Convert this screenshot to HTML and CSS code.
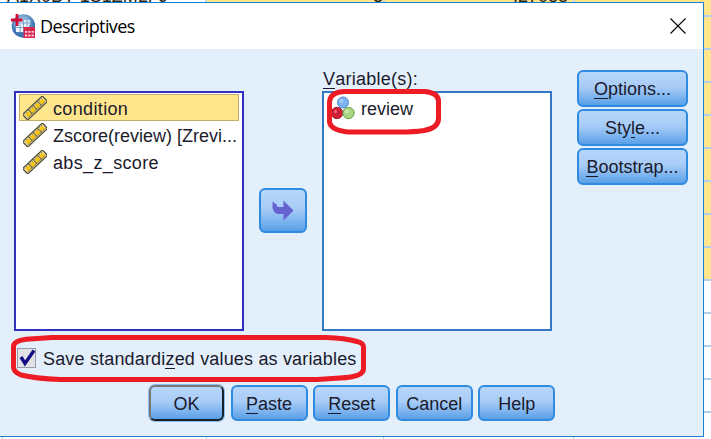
FILE: index.html
```html
<!DOCTYPE html>
<html lang="en">
<head>
<meta charset="utf-8">
<title>Descriptives</title>
<link rel="stylesheet" href="styles.css">
</head>
<body>
<svg class="defs" width="0" height="0">
  <symbol id="ruler" viewBox="0 0 24 24">
    <g transform="rotate(-43 12 12)">
      <rect x="-1.600" y="8.200" width="27.200" height="7.600" fill="#eadb9c" stroke="#4b4936" stroke-width="1.200"/>
      <path d="M0 14h24" stroke="#a39459" stroke-width="1.600"/>
      <path d="M.8 12h4.400M7 12h4.400M13.200 12h4.400M19.400 12h4.400" stroke="#f8c50a" stroke-width="3.600"/>
      <path d="M0 9.500h24" stroke="#6d694b" stroke-width="1" stroke-dasharray="1 1.500"/>
      <path d="M6.100 8.500v6M12.300 8.500v6M18.500 8.500v6" stroke="#6d6747" stroke-width="1"/>
    </g>
  </symbol>
</svg>
<div class="screen">
  <div class="sheet-top">
    <span class="cell id"><i>A1X0BY 1S1ZMLFJ</i></span><span class="cell a"><i>3</i></span><span class="cell b"><i>-.27088</i></span><span class="cell c"></span>
  </div>
  <div class="sheet-side"></div>
  <div class="sheet-bottom"><span></span><span></span><span></span><span></span></div>
  <section class="dialog">
    <header class="titlebar">
      <svg class="appicon" width="24" height="24" viewBox="0 0 24 24">
        <defs><radialGradient id="globe" cx="45%" cy="35%"><stop offset="0" stop-color="#c5dcf0"/><stop offset=".6" stop-color="#75a4d0"/><stop offset="1" stop-color="#3c73b1"/></radialGradient></defs>
        <circle cx="12.500" cy="12" r="11.800" fill="url(#globe)"/>
        <path d="M5 10h13v8H5z" fill="#f1f7fc"/>
        <path d="M10 6h9v5h-9z" fill="#dceaf6"/>
        <path d="M5 13.500h13M9 10v8M12.500 6v12M16 6v12M10 9h9" stroke="#79a5d0" fill="none"/>
        <path d="M6 0v12M0 6h11.500" stroke="#d10c38" stroke-width="2.800"/>
        <path d="M12.500 13H24v11H12.500z" fill="#d9274c"/>
        <path d="M14 17h2.200v1.800H14zM17.300 17h2.200v1.800h-2.200zM20.600 17h2.200v1.800h-2.200zM14 20.600h2.200v1.800H14zM17.300 20.600h2.200v1.800h-2.200zM20.600 20.600h2.200v1.800h-2.200z" fill="#fbd0da"/>
      </svg>
      <h1>Descriptives</h1>
      <svg class="close" width="16" height="16" viewBox="0 0 16 16"><path d="M.5.5l15 15M15.500.5l-15 15" stroke="#000" stroke-width="1.100"/></svg>
    </header>
    <main class="body">
      <div class="columns">
        <ul class="list source">
          <li class="selected"><svg width="24" height="24"><use href="#ruler"/></svg><span class="wide">condition</span></li>
          <li><svg width="24" height="24"><use href="#ruler"/></svg><span>Zscore(review) [Zrevi...</span></li>
          <li><svg width="24" height="24"><use href="#ruler"/></svg><span class="wide">abs_z_score</span></li>
        </ul>
        <button class="move" aria-label="Move"><svg width="22" height="21" viewBox="0 0 22 21"><path d="M.5 1.500V8Q2 14 7 14h4.500v6.500L21.500 10.500 11.500 .5V7H6.500Q5 7 4.500 4.500Z" fill="#6563cf"/></svg></button>
        <div class="target">
          <label><u>V</u>ariable(s):</label>
          <ul class="list">
            <li><svg width="24" height="24" viewBox="0 0 24 24"><circle cx="12" cy="6.500" r="5.500" fill="#7eb2ee" stroke="#4a8bd2"/><circle cx="6" cy="17" r="5.700" fill="#cf2136" stroke="#a91827"/><circle cx="17.500" cy="17" r="5.700" fill="#a8d682" stroke="#6ba148"/><circle cx="10.500" cy="5" r="2" fill="#a5cdf8"/><circle cx="4.500" cy="15.500" r="1.500" fill="#ed6d78"/><circle cx="16" cy="15.500" r="2" fill="#cdecae"/></svg><span>review</span></li>
          </ul>
        </div>
        <div class="side">
          <button><span><u>O</u>ptions...</span></button>
          <button><span>Sty<u>l</u>e...</span></button>
          <button><span><u>B</u>ootstrap...</span></button>
        </div>
      </div>
      <label class="save">
        <svg width="19" height="20" viewBox="0 0 19 20"><rect x=".5" y=".5" width="18" height="19" fill="#e2e2e6" stroke="#969da8"/><path d="M4 9L8 15.500 17 2.500" fill="none" stroke="#140f86" stroke-width="3.400"/></svg>
        <span>Save standardi<u>z</u>ed values as variables</span>
      </label>
      <footer>
        <button class="ok"><span>OK</span></button>
        <button><span><u>P</u>aste</span></button>
        <button><span><u>R</u>eset</span></button>
        <button><span>Cancel</span></button>
        <button><span>Help</span></button>
      </footer>
    </main>
  </section>
  <svg class="marks" width="711" height="439" viewBox="0 0 711 439">
    <path d="M345 91.500H425Q438.500 93 438.500 101V119Q438 128 424 130.500Q414 132 400 132H348Q329.500 130 329.500 121V103Q329.500 92 345 91.500Z"/>
    <path d="M52 337.500H326Q345 338 357 341.500Q363.500 343 363.500 347V369Q363 377 340 378L317 379.500H60Q35 378.500 21 375Q13.500 372 13.500 367V347Q13 340 30 339Z"/>
  </svg>
</div>
</body>
</html>
```
FILE: styles.css
```css
* { box-sizing: border-box; }
body { margin: 0; }
.defs { position: absolute; }
.screen { position: relative; width: 711px; height: 439px; overflow: hidden; background: #fff; font: 18px/20px "Liberation Sans", sans-serif; color: #1a1a2c; }
.sheet-top { display: flex; height: 3px; }
.cell { overflow: hidden; height: 3px; border-right: 2px solid #bcd7ef; background: #ffe58c; }
.cell i { display: block; margin-top: -12px; font-style: normal; line-height: 16px; text-align: right; color: #2b2415; }
.id { width: 207px; background: #fff; }
.id i { text-align: left; padding-left: 7px; }
.a { width: 178px; }
.b { width: 190px; }
.b i { padding-right: 5px; }
.c { flex: 1; border: 0; }
.sheet-side { position: absolute; left: 704px; top: 0; width: 7px; height: 439px; background: repeating-linear-gradient(transparent 0 15px, #b1cfe9 15px 17px, transparent 17px 33px), linear-gradient(#ffe58c 280px, #fff 280px); }
.sheet-bottom { position: absolute; left: 0; bottom: 0; display: flex; height: 3px; }
.sheet-bottom span { border-right: 1px solid #b5d2ea; width: 207px; }
.sheet-bottom span:first-child { width: 3px; }
.sheet-bottom span:nth-child(2) { width: 204px; }
.sheet-bottom span:nth-child(3) { width: 177px; }
.sheet-bottom span:last-child { width: 190px; }
.dialog { position: absolute; left: 0; top: 2px; width: 704px; height: 435px; border: solid #1d80ce; border-width: 1px 1px 1px 0; background: #e3effb; }
.titlebar { display: flex; align-items: center; height: 46px; padding: 0 17px 0 11px; background: #fff; color: #000; }
h1 { flex: 1; margin: 0 0 0 5px; font: 18px/26px "Open Sans", "Noto Sans", sans-serif; letter-spacing: -.6px; }
.body { padding: 21px 15px 0 14px; }
.columns { display: flex; height: 262px; }
.list { list-style: none; margin: 0; padding: 1px 3px; width: 230px; height: 240px; border: 2px solid #3030bd; background: #fff; }
.source { margin-top: 21px; }
.list li { display: flex; align-items: center; height: 27px; padding-left: 3px; border: 1px solid transparent; white-space: nowrap; }
.list li span { margin: 2px 0 0 6px; }
.list .wide { letter-spacing: .35px; }
.list .selected { background: #ffe58c; border-color: #c4ad68; }
button { display: flex; align-items: center; justify-content: center; padding: 0; width: 111px; height: 37px; border: 2px solid #2e8be0; border-radius: 6px; background: linear-gradient(#b7d6fb, #a8ccf7 45%, #7fb5ef 75%, #58a0e7); font: inherit; color: inherit; white-space: nowrap; }
.move { margin: 118px 15px 0 15px; width: 48px; height: 45px; }
.target label { display: block; height: 21px; padding-left: 1px; line-height: 18px; letter-spacing: .25px; }
.target .list { border-color: #3277c5; padding: 1px 2px; }
.target .list li { padding-left: 4px; }
.side { display: flex; flex-direction: column; gap: 2px; margin-left: 25px; }
u { text-decoration: none; border-bottom: 1px solid currentColor; display: inline-block; line-height: 17px; }
.save { display: flex; align-items: center; height: 20px; margin: 16px 0 0 3px; letter-spacing: .17px; }
.save span { margin: 1px 0 0 7px; }
footer { display: flex; gap: 5.6px; margin: 17px 0 0 134px; }
footer button { width: 77px; height: 36px; padding-top: 1px; }
footer .ok { border-color: #777 #17202b #17202b #777; box-shadow: 0 0 0 1px #8abcf0; width: 75px; margin: 0 1px; }
.marks { position: absolute; left: 0; top: 0; pointer-events: none; }
.marks path { fill: none; stroke: #ed1c24; stroke-width: 5; }
```
